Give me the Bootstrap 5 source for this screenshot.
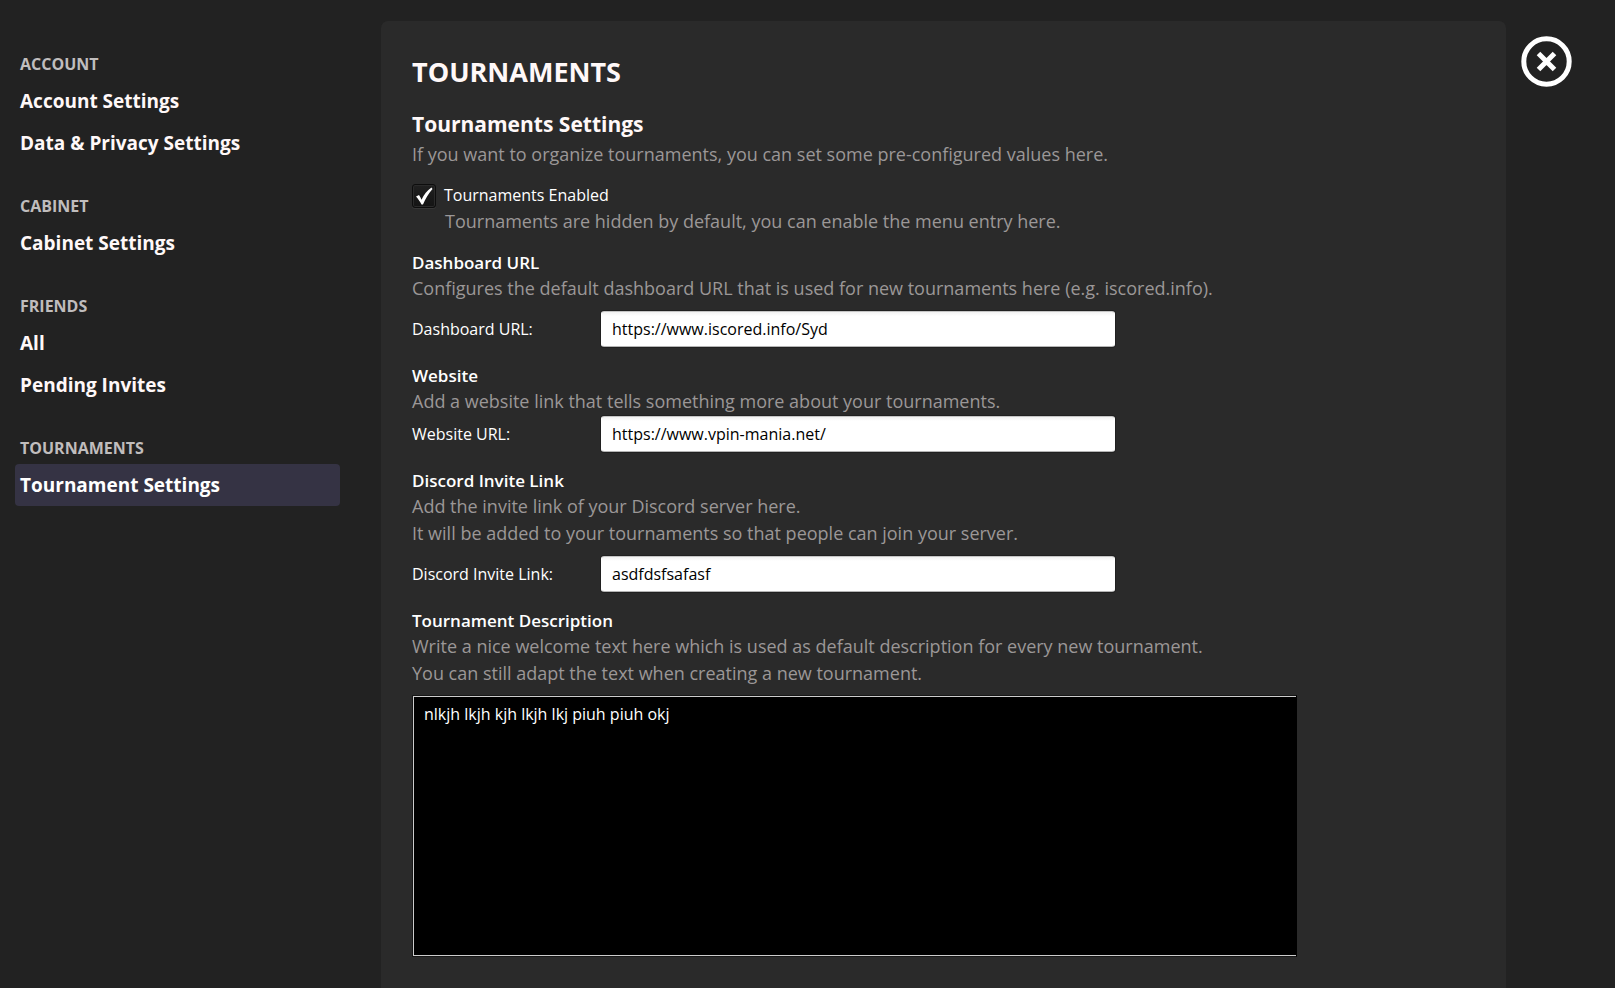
<!DOCTYPE html>
<html lang="en">
<head>
<meta charset="utf-8">
<meta name="viewport" content="width=device-width, initial-scale=1">
<title>Tournament Settings</title>
<link href="https://cdn.jsdelivr.net/npm/bootstrap@5.3.0/dist/css/bootstrap.min.css" rel="stylesheet">
<style>
  body { background: #222; color: #fff; font: 400 16px/27px "Open Sans", sans-serif; }
  .sidebar { width: 381px; padding: 22px 41px 0 15px; }
  .nav-title { margin: 0; padding: 30px 5px 4px; font-size: 16px; font-weight: 700; line-height: 24px; color: #c0bdbd; }
  .side-link { display: block; padding: 8px 5px; font-size: 19px; font-weight: 700; line-height: 26px; color: #fff8f8; text-decoration: none; border-radius: 4px; }
  .side-link:hover { background: #2b2b33; }
  .side-link.active { background: #353344; color: #fff; }
  .panel { margin-top: 21px; padding: 31px; background: #2a2a2a; border-radius: 7px 7px 0 0; }
  .panel h1 { margin: 0 0 17px; font-size: 27px; font-weight: 700; line-height: 40px; color: #fff8f8; }
  .panel h2 { margin: 0 0 2px; font-size: 21px; font-weight: 700; line-height: 30px; color: #fff8f8; }
  .group-title { margin: 0; font-size: 17px; font-weight: 600; line-height: 25px; }
  .hint { margin: 0; font-size: 18px; color: #9b9797; }
  .group { margin-bottom: 16px; }
  .field-row { margin-top: 9px; }
  .field-row.tight { margin-top: 1px; }
  .field-label { width: 189px; }
  .form-control.url-field { max-width: 514px; height: 36px; padding: 0 10px; font-size: 16px; line-height: 24px; color: #000; background: linear-gradient(#f2f2f2, #fff 4px); border: 1px solid #bbb; border-color: #c4c4c4 #fff #b4b4b4; border-radius: 3px; box-shadow: 0 0 0 1px #202020; }
  .form-control.notes { max-width: 885px; height: 262px; padding: 5px 11px; font-size: 16px; line-height: 27px; color: #fff; background: #000; border: 1px solid #161616; border-right-color: #000; border-radius: 0; resize: none; box-shadow: inset 1px 0 #ccc, inset 0 1px #ccc, inset 0 -1px #ccc; }
  .check { margin: 15px 0; }
  .check label { line-height: 25px; }
  .check-box { appearance: none; flex: none; width: 24px; height: 24px; margin: 0; border: 1px solid #0d0d0d; border-radius: 3px; background: linear-gradient(#202020, #141414); box-shadow: inset 0 0 0 1px #2a2a2a, 0 1px 0 #383838; }
  .check-box:checked { background: url("data:image/svg+xml,%3Csvg xmlns='http://www.w3.org/2000/svg' viewBox='0 0 22 22'%3E%3Cpath d='M3 11.5 6 10c1 1.500 1.800 3 2.500 4.800C11 9.500 14 5.500 18.500 2.500L19.500 4C15.500 8.500 12.500 13.500 10 19.500H8.500C7 16.500 5 13.500 3 11.500z' fill='white'/%3E%3C/svg%3E") center / 22px no-repeat, linear-gradient(#202020, #141414); }
  .indent { padding-left: 33px; }
  .gutter { width: 109px; padding: 36px 0 0 15px; }
  .close-btn { padding: 0; border: 0; background: none; color: #fff; }
</style>
</head>
<body>
<div class="d-flex min-vh-100">
  <nav class="sidebar flex-shrink-0" aria-label="Preferences">
    <section>
      <h2 class="nav-title">ACCOUNT</h2>
      <a class="side-link" href="#">Account Settings</a>
      <a class="side-link" href="#">Data &amp; Privacy Settings</a>
    </section>
    <section>
      <h2 class="nav-title">CABINET</h2>
      <a class="side-link" href="#">Cabinet Settings</a>
    </section>
    <section>
      <h2 class="nav-title">FRIENDS</h2>
      <a class="side-link" href="#">All</a>
      <a class="side-link" href="#">Pending Invites</a>
    </section>
    <section>
      <h2 class="nav-title">TOURNAMENTS</h2>
      <a class="side-link active" aria-current="page" href="#">Tournament Settings</a>
    </section>
  </nav>

  <main class="panel flex-grow-1">
    <h1>TOURNAMENTS</h1>
    <h2>Tournaments Settings</h2>
    <p class="hint">If you want to organize tournaments, you can set some pre-configured values here.</p>

    <div class="check">
      <div class="d-flex align-items-center">
        <input class="check-box" type="checkbox" id="enabled" checked>
        <label class="ps-2" for="enabled">Tournaments Enabled</label>
      </div>
      <p class="hint indent">Tournaments are hidden by default, you can enable the menu entry here.</p>
    </div>

    <section class="group">
      <h3 class="group-title">Dashboard URL</h3>
      <p class="hint">Configures the default dashboard URL that is used for new tournaments here (e.g. iscored.info).</p>
      <div class="field-row d-flex align-items-center">
        <label class="field-label flex-shrink-0" for="dashboard">Dashboard URL:</label>
        <input class="form-control url-field" type="text" id="dashboard" value="https://www.iscored.info/Syd">
      </div>
    </section>

    <section class="group">
      <h3 class="group-title">Website</h3>
      <p class="hint">Add a website link that tells something more about your tournaments.</p>
      <div class="field-row tight d-flex align-items-center">
        <label class="field-label flex-shrink-0" for="website">Website URL:</label>
        <input class="form-control url-field" type="text" id="website" value="https://www.vpin-mania.net/">
      </div>
    </section>

    <section class="group">
      <h3 class="group-title">Discord Invite Link</h3>
      <p class="hint">Add the invite link of your Discord server here.<br>It will be added to your tournaments so that people can join your server.</p>
      <div class="field-row d-flex align-items-center">
        <label class="field-label flex-shrink-0" for="discord">Discord Invite Link:</label>
        <input class="form-control url-field" type="text" id="discord" value="asdfdsfsafasf">
      </div>
    </section>

    <section>
      <h3 class="group-title"><label for="description">Tournament Description</label></h3>
      <p class="hint">Write a nice welcome text here which is used as default description for every new tournament.<br>You can still adapt the text when creating a new tournament.</p>
      <textarea class="form-control notes mt-2" id="description">nlkjh lkjh kjh lkjh lkj piuh piuh okj</textarea>
    </section>
  </main>

  <div class="gutter flex-shrink-0">
    <button class="close-btn d-block" type="button" aria-label="Close">
      <svg class="d-block" width="51" height="51" viewBox="0 0 51 51" fill="none" stroke="currentColor" stroke-width="5" aria-hidden="true">
        <circle cx="25.5" cy="25.5" r="22.700"/>
        <path d="M17.500 17.500 33.500 33.500M33.500 17.500 17.500 33.500"/>
      </svg>
    </button>
  </div>
</div>
<script src="https://cdn.jsdelivr.net/npm/bootstrap@5.3.0/dist/js/bootstrap.bundle.min.js"></script>
</body>
</html>
